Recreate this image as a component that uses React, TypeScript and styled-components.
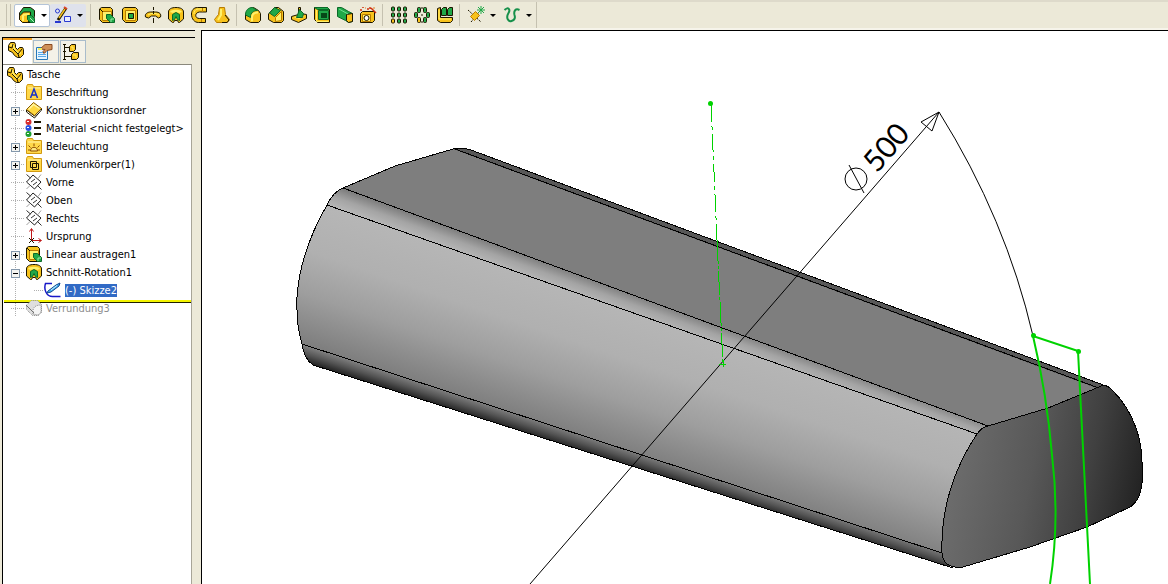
import React from "react";
import styled, { createGlobalStyle, css } from "styled-components";

const Global = createGlobalStyle`
  *, *::before, *::after { box-sizing: border-box; }
  body { margin: 0; background: #ece9d8; }
  button { font: inherit; color: inherit; }
`;

const Y = "#f7c21c";
const YL = "#fff06a";
const YD = "#b87c00";
const G = "#20a848";
const GD = "#0b6a28";
const K = "#1c1600";

/* ---------- icons, all on a 18 x 18 grid ---------- */

type IconName =
  | "extrude" | "cutExtrude" | "revolve" | "cutRevolve" | "sweep" | "loft"
  | "fillet" | "chamfer" | "rib" | "shell" | "draft" | "hole"
  | "linearPattern" | "circularPattern" | "mirror" | "refGeometry" | "curve"
  | "features" | "sketch" | "part" | "property" | "config"
  | "annotation" | "folder" | "material" | "lighting" | "bodies" | "plane"
  | "origin" | "sketchItem" | "suppressed";

const folderBase = (
  <>
    <path d="M1.5 3.5l1-2h5l1 2h8v13h-15z" fill="#ffd84a" stroke="#d29a10" />
    <path d="M3 5h12.5" stroke="#fff3a8" />
  </>
);

const dotColumns = [1, 7, 13];
const dotRows = [0, 6, 12];

const shapes: Record<IconName, React.ReactNode> = {
  extrude: (
    <>
      <path d="M1.5 3l2-1.5h9l2 2v11l-2 2h-8l-3-3z" fill={Y} stroke={K} />
      <path d="M4.5 5.5h9v9h-9z" fill={YL} stroke={YD} />
      <path d="M2 3l3 3" stroke={K} />
      <path d="M8.5 8.5h4l4 4v4h-4l-4-4z" fill={G} stroke={GD} />
      <path d="M13 13h3M13 13v3" stroke="#9be8a8" />
    </>
  ),
  cutExtrude: (
    <>
      <path d="M1.5 3l2-1.5h11l2 2v11l-2 2h-10l-3-3z" fill={Y} stroke={K} />
      <path d="M4.5 4.5h10v10h-10z" fill={YL} stroke={YD} />
      <path d="M7.5 7.5h5v5h-5z" fill={G} stroke={K} />
    </>
  ),
  revolve: (
    <>
      <path d="M9.5 1v3M9.5 6v2M9.5 12v5" stroke={K} />
      <path d="M1.500 11c-1-3 2-5 5-5h5c4 0 6 2 5 5l-2 1-3-2h-4l-3 2z" fill={Y} stroke={K} />
      <path d="M4 9l3-1.500h5l3 1.500" stroke={YL} />
      <path d="M9.5 1v8" stroke={K} strokeDasharray="3 1" />
    </>
  ),
  cutRevolve: (
    <>
      <path d="M1.5 6c0-3 3-4.500 7.500-4.500s7.500 1.500 7.500 4.500v7l-4 3.500h-1l-1-2h-3l-1 2h-1l-4-3.500z" fill={Y} stroke={K} />
      <path d="M3 6c1-3 11-3 12 0l-3 1c-1-1-5-1-6 0z" fill={YL} />
      <path d="M5.5 8.5l3.500-2 3.500 2v6l-2-1-1.500-3-1.500 3-2 1z" fill={G} stroke={GD} />
    </>
  ),
  sweep: (
    <>
      <path d="M16.500 1.500h-9c-4 0-6 3-6 6.500 0 5 3 8.500 7 8.500h7v-4h-6c-5 0-5-6 0-6.500h7z" fill={Y} stroke={K} />
      <path d="M15 3h-7c-3 0-4 3-4 5" fill="none" stroke={YL} />
      <path d="M12.500 2v4M11.500 13v3" stroke={YD} />
    </>
  ),
  loft: (
    <>
      <path d="M6.500 1.500h5l1 7 4 5-2 3h-11l-2-3 4-5z" fill={Y} stroke={YD} />
      <path d="M8 3v6l-3 5" fill="none" stroke={YL} strokeWidth="2" />
      <path d="M12 9l4 5-2 2.500h-5" fill="none" stroke={K} />
    </>
  ),
  fillet: (
    <>
      <path d="M1.500 8l4-5 4-1.500 5 3 2 3v7l-2 2h-8l-5-3z" fill={Y} stroke={K} />
      <path d="M1.500 9c0-5 3-7.500 7-7.500l5 3c-4 0-7 2-7 7z" fill={G} stroke={GD} />
      <path d="M8 15.500v-4c0-3 2-5 6-5" fill="none" stroke={YL} strokeWidth="2" />
    </>
  ),
  chamfer: (
    <>
      <path d="M1.500 8l6-6.500h4l5 4v9l-2 2h-8l-5-3z" fill={Y} stroke={K} />
      <path d="M2.500 7l5-5.500 6 3-6 6z" fill={G} stroke={GD} />
      <path d="M8.500 15.500v-4l6-6v9z" fill={YL} stroke={YD} />
    </>
  ),
  rib: (
    <>
      <path d="M8.500 1.500h2v6l6 1v4l-8 4-7-3v-3l7-2z" fill={Y} stroke={K} />
      <path d="M3 11l6-1h6l-6 3z" fill={YL} />
      <path d="M9.500 3.500l4 4-1 4h-6z" fill={G} stroke={GD} />
    </>
  ),
  shell: (
    <>
      <path d="M1.500 1.500h13l2 2v13h-12l-3-3z" fill={Y} stroke={K} />
      <path d="M1.500 1.500h13l2 2h-12zM5.500 4.500h10v9h-10z" fill={G} stroke={GD} />
      <path d="M8 7h6v5h-6z" fill="#064818" />
      <path d="M3.500 4v11.500h12" fill="none" stroke={YL} />
    </>
  ),
  draft: (
    <>
      <path d="M1.500 1.500h4l7 4 4 2v8l-4 1-3-2-8-4z" fill={G} stroke={GD} />
      <path d="M10.500 8.500l6-1v8l-4 1-2-2z" fill={Y} stroke={K} />
      <path d="M3 3l9 5" stroke="#70e090" />
    </>
  ),
  hole: (
    <>
      <path d="M1.500 7.500l2-2h12v9l-2 2h-12z" fill={Y} stroke={K} />
      <path d="M3.500 8.500h8v7h-8z" fill={YL} stroke={YD} />
      <circle cx="7.500" cy="12" r="2.500" fill="#fff" stroke={K} />
      <path d="M4 1v1M8 3h2M11 1v2M1 4h2M17 7l-5-5" stroke="#d03010" strokeWidth="1.500" />
      <path d="M6 2h1M14 2h2" stroke="#e08020" />
    </>
  ),
  linearPattern: (
    <>
      {dotColumns.map((x) => dotRows.map((y) => (
        <rect key={`${x}-${y}`} x={x + 0.5} y={y + 1} width="3" height="4" rx="1" fill={x === 1 && y === 12 ? Y : G} stroke={K} />
      )))}
    </>
  ),
  circularPattern: (
    <>
      {[[4, 1], [10, 1], [1, 6], [13, 6], [10, 11]].map(([x, y]) => (
        <rect key={`${x}-${y}`} x={x + 0.5} y={y + 0.5} width="3" height="5" rx="1" fill={G} stroke={K} />
      ))}
      <rect x="4.5" y="11.5" width="3" height="5" rx="1" fill={Y} stroke={K} />
      <path d="M9 1v2M9 8v2M9 15v2" stroke={K} />
    </>
  ),
  mirror: (
    <>
      <path d="M1.500 2.500l3-1v10h12v3l-2 2h-10l-3-2z" fill={Y} stroke={K} />
      <path d="M3 4v9h12" fill="none" stroke={YL} />
      <path d="M5.500 3.500l2-2h3v8h-5zM11.500 3.500l2-2h3v8h-5z" fill={G} stroke={K} />
    </>
  ),
  refGeometry: (
    <>
      <path d="M1 4l13 12M4 16l8-9" stroke={K} strokeDasharray="2 1" />
      <path d="M3.500 10.500l5-5 4 4-5 5z" fill={Y} stroke={YD} />
      <path d="M14 0v8M10 4h8M11 1l6 6M17 1l-6 6" stroke={G} />
    </>
  ),
  curve: (
    <path d="M1.500 4c4-4 6 0 4 3-3 5 0 9 3 8s4-3 3-6c-1-4 1-7 5-5" fill="none" stroke="#16904a" strokeWidth="2" />
  ),
  features: (
    <>
      <path d="M1.500 7l4-5.500h7l4 3v6l-2 6h-9l-4-3z" fill={G} stroke={K} />
      <path d="M1.500 10l4-4h7v7l-3 3.500h-5l-3-3z" fill={Y} stroke={K} />
      <path d="M5 9l6-1M5 9v6" stroke={YL} strokeWidth="2" />
      <path d="M9.500 9.500h4l3 3v4h-4l-3-3z" fill={G} stroke={GD} />
      <path d="M12 12l4 4" stroke="#b8f4c0" />
    </>
  ),
  sketch: (
    <>
      <circle cx="3.500" cy="5" r="2" fill="none" stroke="#2838d0" />
      <path d="M1 16h6" stroke="#2838d0" strokeWidth="2" />
      <path d="M10.500 10.500h6v5h-6z" fill="#e8ecff" stroke="#2838d0" />
      <path d="M4 14L12 2" stroke={K} strokeWidth="3" />
      <path d="M5 12L11 3" stroke={Y} strokeWidth="1.500" />
      <path d="M10 1l3 2" stroke="#e04828" strokeWidth="2" />
    </>
  ),
  part: (
    <>
      <path d="M1.500 4.500l2-3h4l1 2v3l2 2 2-2h3l1 2v5l-3 3h-3l-3-2-2-3-4-2z" fill={Y} stroke={K} />
      <path d="M3 4h3l2 5 3 3h3" fill="none" stroke={YL} strokeWidth="1.500" />
      <path d="M2 6l3 1 1-4M6 8l5 5 1 3M11 13l4-5" fill="none" stroke={K} />
    </>
  ),
  property: (
    <>
      <path d="M1.500 4.500h11v12h-11z" fill="#e6f5ff" stroke="#2878b8" />
      <path d="M3 9.500h8M3 11.500h8M3 13.500h8" stroke="#58a8e8" />
      <path d="M5 6l5-4.500h7v5l-5 1-3 3-1-2 2-2z" fill="#d09058" stroke="#8a4a20" />
      <path d="M3 6h4" stroke="#f4f060" strokeWidth="2" />
    </>
  ),
  config: (
    <>
      <path d="M2.500 1v16M2.500 4.500h5M2.500 13.500h7" fill="none" stroke={K} />
      <path d="M1 1.500h3M1 8.500h3M1 16.500h3" stroke={K} />
      <path d="M7.500 3.500l2-2h4v5l-2 2h-4zM9.500 11.500l2-2h5v5l-2 2h-5z" fill={Y} stroke={K} />
      <path d="M9 4h2v3M11 12h3v3" fill="none" stroke={YL} />
    </>
  ),
  annotation: (
    <>
      {folderBase}
      <path d="M5.500 15l3.500-9 3.500 9M7 12h4" fill="none" stroke="#1830c8" strokeWidth="1.500" />
    </>
  ),
  folder: (
    <>
      <path d="M1.500 9v2l8 6 7-8v-2l-7 8z" fill="#fff" stroke={K} />
      <path d="M1.500 8.500l7-7 8 6-7 7z" fill="#ffd840" stroke="#8a5c00" />
      <path d="M3.500 8.500l5-5 6 4" fill="none" stroke="#fff5a0" strokeWidth="1.500" />
    </>
  ),
  material: (
    <>
      <circle cx="3.5" cy="3" r="3" fill="#d83030" />
      <circle cx="3.5" cy="9" r="3" fill="#2850e0" />
      <circle cx="3.5" cy="15" r="3" fill="#20a030" />
      <path d="M2 2.500h2M2 8.500h2M2 14.500h2" stroke="#fff" />
      <path d="M9 3h7M9 9h7M9 15h7" stroke={K} strokeWidth="2" />
    </>
  ),
  lighting: (
    <>
      {folderBase}
      <path d="M5.500 14c0-5 7-5 7 0zM9 9V6.500M5.500 10.500l-2-2M12.500 10.500l2-2M5 13H3M13 13h2" fill="#ffe880" stroke="#8c4a00" />
    </>
  ),
  bodies: (
    <>
      {folderBase}
      <path d="M5.500 6.500h6v6h-6zM7.500 8.500h6v6h-6z" fill="none" stroke={K} />
    </>
  ),
  plane: (
    <>
      <path d="M1.500 9l6.500-7 8 7-6.500 7z" fill="#fff" stroke="#202020" />
      <path d="M1.500 1.500l4 3.500M12.500 12.500l4 4M6 9l4-3M8 12l4-3" stroke="#303030" />
      <path d="M5 12.500l-3.500 3.500M13 5.500l3-4" stroke="#a0a0a0" />
    </>
  ),
  origin: (
    <>
      <path d="M6.500 13V2M4.500 4.500l2-3 2 3M7 13.500h9M13.500 11.500l3 2-3 2" fill="none" stroke="#c01818" />
      <path d="M4 11l5 5M9 11l-5 5" stroke={K} />
    </>
  ),
  sketchItem: (
    <>
      <path d="M8 2.500H1.500c-2 6 1 13 7 13h8" fill="none" stroke="#1818c8" strokeWidth="1.500" />
      <path d="M4 10L12 4l4-2-1 3-8 6-4 1z" fill="#48b0f0" stroke="#104890" />
      <path d="M7 9l6-4.500" stroke="#c8f0ff" />
    </>
  ),
  suppressed: (
    <>
      <path d="M1.500 6l5-4.500h6l4 4v8l-3 3h-6l-6-6z" fill="#dedede" stroke="#8c8c8c" strokeDasharray="1 1" />
      <path d="M8 15v-3c0-4 3-6 8-6v7l-3 3z" fill="#f4f4f4" stroke="#8c8c8c" strokeDasharray="1 1" />
      <path d="M1 6l8 8" stroke="#707070" />
    </>
  ),
};

const Glyph = styled.svg`
  display: block;
  flex: none;
  width: 18px;
  height: 18px;
`;

const Icon = ({ name }: { name: IconName }) => (
  <Glyph viewBox="0 0 18 18" fill="none" aria-hidden="true">{shapes[name]}</Glyph>
);

/* ---------- window frame ---------- */

const Window = styled.div`
  display: flex;
  flex-direction: column;
  height: 100vh;
  overflow: hidden;
  background: #ece9d8;
  color: #000;
  font: 11px/18px "DejaVu Sans Condensed", "Noto Sans", sans-serif;
`;

const TopBar = styled.header`
  display: flex;
  flex: none;
  height: 30px;
  border-top: 2px solid #dedacb;
  border-bottom: 2px solid #f6f4ea;
`;

const Toolbar = styled.div`
  display: flex;
  align-items: center;
  padding: 0 1px 0 6px;
  border-right: 1px solid #c5c1b0;
`;

const Grip = styled.span`
  width: 5px;
  height: 22px;
  margin-right: 3px;
  border: solid #c5c1b0;
  border-width: 0 1px;
`;

const Divider = styled.span`
  width: 1px;
  height: 22px;
  margin: 0 3px 0 4px;
  background: #c5c1b0;
`;

const ToolButton = styled.button<{ $tone?: "active" | "hover"; $menu?: boolean }>`
  display: flex;
  align-items: center;
  gap: 5px;
  width: ${(p) => (p.$menu ? "36px" : "23px")};
  height: 23px;
  padding: 0 0 0 3px;
  border: 1px solid transparent;
  border-radius: 2px;
  background: none;
  ${(p) => p.$tone === "active" && css`background: #fff; border-color: #b4c4d8;`}
  ${(p) => p.$tone === "hover" && css`background: #dfe2ec;`}
`;

const Caret = styled.span`
  border: 3px solid transparent;
  border-top-color: #000;
  border-bottom: 0;
`;

const Body = styled.div`
  display: flex;
  flex: 1;
  min-height: 0;
`;

/* ---------- feature manager ---------- */

const Side = styled.aside`
  display: flex;
  flex: none;
  flex-direction: column;
  width: 195px;
  margin-right: 6px;
  padding-top: 6px;
  border-top: 1px solid #000;
`;

const Panel = styled.div`
  display: flex;
  flex: 1;
  flex-direction: column;
  min-height: 0;
  margin-left: 2px;
  border-top: 1px solid #000;
  border-left: 1px solid #000;
`;

const Tabs = styled.div`
  display: flex;
  align-items: flex-end;
  gap: 1px;
  height: 26px;
`;

const Tab = styled.button<{ $active?: boolean }>`
  display: flex;
  align-items: center;
  width: 26px;
  height: 23px;
  margin-bottom: 1px;
  padding: 0 0 0 1px;
  border: 1px solid #a9bccb;
  background: #f4f2e8;
  ${(p) => p.$active && css`
    width: 29px;
    height: 26px;
    margin-bottom: 0;
    padding: 0 0 4px 4px;
    border: 0;
    border-top: 2px solid #f0a020;
    background: #fff;
  `}
`;

const Tree = styled.ul`
  flex: 1;
  min-height: 0;
  margin: 0 3px 0 0;
  padding: 0 0 0 1px;
  list-style: none;
  background: #fff;
  border-top: 1px solid #8a887c;
  border-right: 1px solid #a8a598;
`;

const Branch = styled.ul`
  height: 234px;
  margin: 0;
  padding: 0;
  list-style: none;
  background: linear-gradient(#b0b0b0 50%, transparent 50%) 11px 0 / 1px 2px repeat-y;
`;

const Item = styled.li`
  display: flex;
  align-items: center;
  height: 18px;
  white-space: nowrap;
`;

const RootItem = styled(Item)`
  gap: 3px;
  padding: 2px 0 0 2px;
`;

const Lead = styled.span<{ $deep?: boolean }>`
  display: flex;
  flex: none;
  align-items: center;
  width: ${(p) => (p.$deep ? "40px" : "21px")};
  height: 100%;
  padding-left: ${(p) => (p.$deep ? "30px" : "7px")};
  background: linear-gradient(90deg, #b0b0b0 50%, transparent 50%) right 9px / 2px 1px repeat-x;
  background-clip: content-box;
  background-origin: content-box;
`;

const Expander = styled.button`
  display: flex;
  width: 9px;
  height: 9px;
  margin-top: 3px;
  padding: 0;
  border: 1px solid #8498ac;
  background: #f4f4f0;
`;

const Label = styled.span<{ $selected?: boolean; $muted?: boolean }>`
  margin-left: 3px;
  line-height: 13px;
  ${(p) => p.$selected && css`color: #fff; background: #316ac5;`}
  ${(p) => p.$muted && css`color: #8e8e8e;`}
`;

const RollbackBar = styled.li`
  height: 3px;
  margin: 1px 0 -4px;
  background: #202000;
  border-top: 2px solid #f4f400;
`;

type Node = {
  label: string;
  icon: IconName;
  state?: "open" | "closed";
  deep?: boolean;
  selected?: boolean;
  muted?: boolean;
};

const nodes: Node[] = [
  { label: "Beschriftung", icon: "annotation" },
  { label: "Konstruktionsordner", icon: "folder", state: "closed" },
  { label: "Material <nicht festgelegt>", icon: "material" },
  { label: "Beleuchtung", icon: "lighting", state: "closed" },
  { label: "Volumenkörper(1)", icon: "bodies", state: "closed" },
  { label: "Vorne", icon: "plane" },
  { label: "Oben", icon: "plane" },
  { label: "Rechts", icon: "plane" },
  { label: "Ursprung", icon: "origin" },
  { label: "Linear austragen1", icon: "extrude", state: "closed" },
  { label: "Schnitt-Rotation1", icon: "cutRevolve", state: "open" },
  { label: "(-) Skizze2", icon: "sketchItem", deep: true, selected: true },
  { label: "Verrundung3", icon: "suppressed", muted: true },
];

const TreeNode = ({ node }: { node: Node }) => (
  <Item>
    <Lead $deep={node.deep}>
      {node.state && (
        <Expander aria-label={node.label} aria-expanded={node.state === "open"}>
          <svg width="7" height="7" viewBox="0 0 7 7" stroke="#000" shapeRendering="crispEdges">
            <path d={node.state === "open" ? "M1 3.5h5" : "M1 3.5h5M3.5 1v5"} />
          </svg>
        </Expander>
      )}
    </Lead>
    <Icon name={node.icon} />
    <Label $selected={node.selected} $muted={node.muted}>{node.label}</Label>
  </Item>
);

/* ---------- model view ---------- */

const View = styled.main`
  flex: 1;
  min-width: 0;
  background: #fff;
  border-top: 1px solid #000;
  border-left: 1px solid #000;
`;

const Scene = styled.svg`
  display: block;
  width: 100%;
  height: 100%;
`;

const Model = () => (
  <Scene viewBox="202 31 966 553" preserveAspectRatio="xMinYMin slice" role="img" aria-label="Tasche">
    <defs>
      <linearGradient id="front" gradientUnits="userSpaceOnUse" x1="500" y1="265" x2="456" y2="395">
        <stop offset="0" stopColor="#b6b6b6" />
        <stop offset="0.35" stopColor="#b0b0b0" />
        <stop offset="0.65" stopColor="#9e9e9e" />
        <stop offset="1" stopColor="#7e7e7e" />
      </linearGradient>
      <linearGradient id="upperEdge" gradientUnits="userSpaceOnUse" x1="640" y1="297" x2="627" y2="333">
        <stop offset="0" stopColor="#808080" />
        <stop offset="0.25" stopColor="#a4a4a4" />
        <stop offset="0.5" stopColor="#b6b6b6" />
      </linearGradient>
      <linearGradient id="lowerEdge" gradientUnits="userSpaceOnUse" x1="620" y1="447" x2="610" y2="478">
        <stop offset="0" stopColor="#808080" />
        <stop offset="0.25" stopColor="#545454" />
        <stop offset="0.6" stopColor="#0c0c0c" />
      </linearGradient>
      <linearGradient id="endFace" gradientUnits="userSpaceOnUse" x1="955" y1="460" x2="1145" y2="495">
        <stop offset="0" stopColor="#6c6c6c" />
        <stop offset="0.4" stopColor="#585858" />
        <stop offset="0.7" stopColor="#404040" />
        <stop offset="1" stopColor="#202020" />
      </linearGradient>
    </defs>

    <g shapeRendering="crispEdges" strokeLinejoin="round">
      <path d="M343 188L395 166L453 149L463 148L471 150L1106 386L1087 392L1048 408L988 426Z" fill="#7e7e7e" />
      <path d="M453 149L463 148L471 150L1106 386L1096 388Z" fill="#585858" />
      <path d="M327 205Q333 192 343 188L988 426Q981 427 977 434Z" fill="url(#upperEdge)" />
      <path d="M302 344Q296 325 297 297Q300 252 327 205L977 434Q942 490 942 553Z" fill="url(#front)" />
      <path d="M302 344Q304 359 313 365L953 568Q943 564 942 553Z" fill="url(#lowerEdge)" />
      <path
        d="M988 426L1048 408L1087 392L1101 386Q1106 384 1111 389Q1128 405 1136 428Q1142 445 1142 462V483Q1140 501 1130 507L1087 527L1030 547L963 567Q943 569 942 553Q940 490 977 434Q982 427 988 426Z"
        fill="url(#endFace)"
        stroke="#000"
      />
      <path
        d="M953 568L313 365Q304 359 302 344Q296 325 297 297Q300 252 327 205Q333 192 343 188L395 166L453 149L463 148L471 150L1106 386"
        fill="none"
        stroke="#000"
      />
      <path d="M455 149L1096 387M343 188L988 426M327 205L977 434M302 344L942 553" fill="none" stroke="#000" />
    </g>

    <g fill="none" stroke="#000">
      <path d="M530 584L939 112Q1006 219 1033 336" />
      <path d="M939 112L921 122L932 131Z" />
      <circle cx="856" cy="179" r="11" />
      <path d="M849 165L864 193" />
    </g>
    <text
      transform="translate(877 174) rotate(-49)"
      fontFamily='Lato, "Liberation Sans", sans-serif'
      fontSize="30"
      fill="#000"
    >
      500
    </text>

    <g fill="none" stroke="#00d200">
      <path d="M711 104L717 240" strokeDasharray="18 4 4 4" shapeRendering="crispEdges" />
      <path d="M717 240L723 364" strokeDasharray="24 2 3 2" shapeRendering="crispEdges" />
      <path d="M719 364h7M723 360v7" shapeRendering="crispEdges" />
      <path d="M1050 584Q1060 520 1052 455Q1047 395 1033 336L1078 351L1090 584" strokeWidth="2" />
    </g>
    <g fill="#00d200">
      <circle cx="710.5" cy="103.5" r="2.5" />
      <circle cx="1033.5" cy="335.5" r="2.5" />
      <circle cx="1078.5" cy="351.5" r="2.5" />
    </g>
  </Scene>
);

const Tool = ({ name, label, menu, tone }: { name: IconName; label: string; menu?: boolean; tone?: "active" | "hover" }) => (
  <ToolButton aria-label={label} $menu={menu} $tone={tone}>
    <Icon name={name} />
    {menu && <Caret />}
  </ToolButton>
);

export default function App() {
  return (
    <Window>
      <Global />
      <TopBar>
        <Toolbar role="toolbar" aria-label="Features">
          <Grip />
          <Tool name="features" label="Features" menu tone="active" />
          <Tool name="sketch" label="Skizze" menu tone="hover" />
          <Divider />
          <Tool name="extrude" label="Linear austragen" />
          <Tool name="cutExtrude" label="Schnitt linear" />
          <Tool name="revolve" label="Rotation" />
          <Tool name="cutRevolve" label="Schnitt-Rotation" />
          <Tool name="sweep" label="Austragung" />
          <Tool name="loft" label="Ausformung" />
          <Divider />
          <Tool name="fillet" label="Verrundung" />
          <Tool name="chamfer" label="Fase" />
          <Tool name="rib" label="Rippe" />
          <Tool name="shell" label="Wandung" />
          <Tool name="draft" label="Formschräge" />
          <Tool name="hole" label="Bohrungsassistent" />
          <Divider />
          <Tool name="linearPattern" label="Lineares Muster" />
          <Tool name="circularPattern" label="Kreismuster" />
          <Tool name="mirror" label="Spiegeln" />
          <Divider />
          <Tool name="refGeometry" label="Referenzgeometrie" menu />
          <Tool name="curve" label="Kurven" menu />
        </Toolbar>
      </TopBar>
      <Body>
        <Side>
          <Panel>
            <Tabs role="tablist">
              <Tab role="tab" aria-label="FeatureManager" aria-selected $active><Icon name="part" /></Tab>
              <Tab role="tab" aria-label="PropertyManager"><Icon name="property" /></Tab>
              <Tab role="tab" aria-label="ConfigurationManager"><Icon name="config" /></Tab>
            </Tabs>
            <Tree>
              <RootItem>
                <Icon name="part" />
                <span>Tasche</span>
              </RootItem>
              <li>
                <Branch>
                  {nodes.map((node) => (
                    <React.Fragment key={node.label}>
                      {node.muted && <RollbackBar />}
                      <TreeNode node={node} />
                    </React.Fragment>
                  ))}
                </Branch>
              </li>
            </Tree>
          </Panel>
        </Side>
        <View>
          <Model />
        </View>
      </Body>
    </Window>
  );
}
